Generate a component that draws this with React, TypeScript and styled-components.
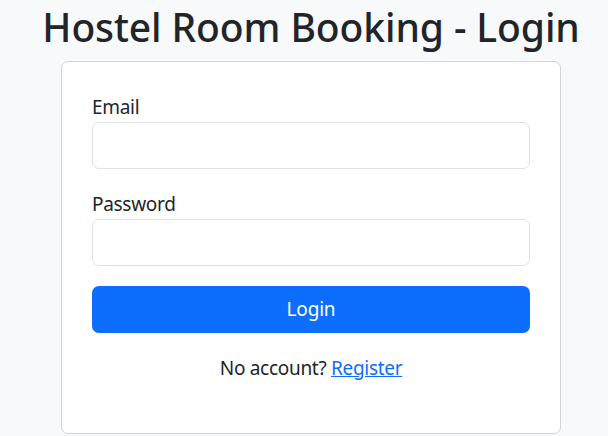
import React from "react";
import styled, { createGlobalStyle } from "styled-components";

const GlobalStyle = createGlobalStyle`
  html, body {
    margin: 0;
    padding: 0;
    background: #f8f9fa;
  }
  body {
    font-family: "Noto Sans", "Open Sans", sans-serif;
    color: #212529;
    font-size: 19px;
    line-height: 1.5;
  }
  * { box-sizing: border-box; }
`;

const Page = styled.main`
  display: flex;
  flex-direction: column;
  align-items: center;
  padding-left: 14px;
`;

const Title = styled.h1`
  margin: 0 0 10px;
  padding-top: 4px;
  font-size: 39px;
  font-weight: 500;
  line-height: 1.2;
  letter-spacing: -0.1px;
  color: #212529;
  white-space: nowrap;
`;

const Card = styled.section`
  width: 500px;
  background: #fff;
  border: 1px solid #d3d4d5;
  border-radius: 7px;
  padding: 30px;
`;

const Form = styled.form`
  display: flex;
  flex-direction: column;
`;

const Field = styled.div`
  display: flex;
  flex-direction: column;
  margin-bottom: 20px;
`;

const Label = styled.label`
  font-size: 19px;
  line-height: 30px;
  letter-spacing: -0.3px;
`;

const Input = styled.input`
  height: 47px;
  width: 100%;
  border: 1px solid #dee2e6;
  border-radius: 7px;
  background: #fff;
  padding: 7px 15px;
  font: inherit;
  outline: none;
`;

const Button = styled.button`
  height: 47px;
  width: 100%;
  border: none;
  border-radius: 7px;
  background: #0d6efd;
  color: #fff;
  font: inherit;
  font-size: 19px;
  letter-spacing: -0.2px;
  cursor: pointer;
`;

const Note = styled.p`
  margin: 20px 0 20px;
  text-align: center;
  font-size: 19px;
  line-height: 30px;
  letter-spacing: -0.3px;
`;

const Link = styled.a`
  color: #0d6efd;
  text-decoration: underline;
`;

export default function App() {
  return (
    <>
      <GlobalStyle />
      <Page>
        <Title>Hostel Room Booking - Login</Title>
        <Card>
          <Form onSubmit={(e) => e.preventDefault()}>
            <Field>
              <Label htmlFor="email">Email</Label>
              <Input id="email" type="email" />
            </Field>
            <Field>
              <Label htmlFor="password">Password</Label>
              <Input id="password" type="password" />
            </Field>
            <Button type="submit">Login</Button>
          </Form>
          <Note>
            No account? <Link href="#">Register</Link>
          </Note>
        </Card>
      </Page>
    </>
  );
}
